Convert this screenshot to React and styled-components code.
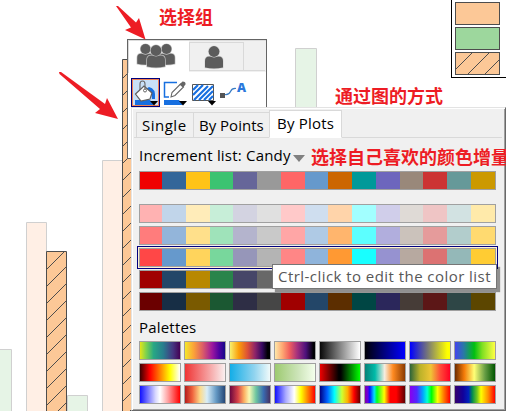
import React from "react";
import styled, { createGlobalStyle } from "styled-components";

const Global = createGlobalStyle`
  * { box-sizing: border-box; }
  body { margin: 0; background: #fff; overflow: hidden; }
`;

const Stage = styled.main`
  position: relative;
  width: 506px;
  height: 411px;
  overflow: hidden;
  background: #fff;
  font-family: "Open Sans", "Noto Sans", sans-serif;
`;

const Plot = styled.svg`
  display: block;
`;

const Legend = styled.div`
  position: absolute;
  left: 451px;
  top: -10px;
  width: 70px;
  height: 88px;
  padding: 11px 0 0 3px;
  border: 1px solid #000;
  display: flex;
  flex-direction: column;
  gap: 2px;
  background: #fff;
`;

const LegendSwatch = styled.svg`
  width: 45px;
  height: 23px;
  flex: none;
  display: block;
  background: ${(p) => p.$fill};
  border: 1px solid #4d4d4d;
`;

const MiniToolbar = styled.section`
  position: absolute;
  left: 127px;
  top: 39px;
  width: 140px;
  height: 120px;
  border: 1px solid #646464;
  background: #fff;
`;

const ScopeTabs = styled.div`
  display: flex;
  height: 32px;
  background: #f0f0f0;
  border-top: 1px solid #dcdcdc;
`;

const ScopeTab = styled.div`
  width: ${(p) => p.$width}px;
  height: ${(p) => (p.$active ? 32 : 29)}px;
  margin-top: ${(p) => (p.$active ? 0 : 1)}px;
  background: ${(p) => (p.$active ? "#fff" : "#f0f0f0")};
  border: solid #d9d9d9;
  border-width: ${(p) => (p.$active ? "0 0 0 1px" : "1px 1px 1px 1px")};
  display: flex;
  justify-content: center;
`;

const TabRule = styled.div`
  flex: 1;
  height: 30px;
  margin-right: 1px;
  border-bottom: 1px solid #d9d9d9;
`;

const ToolRow = styled.div`
  display: flex;
  align-items: flex-start;
  padding: 6px 0 0 3px;
`;

const ToolButton = styled.button`
  display: block;
  width: 29px;
  height: 29px;
  padding: 0;
  border: 1px solid ${(p) => (p.$active ? "#00007b" : "transparent")};
  background: ${(p) => (p.$active ? "#c9e0f7" : "transparent")};
  box-shadow: ${(p) => (p.$active ? "inset 0 0 0 1px #f08050" : "none")};
`;

const Glyph = styled.svg`
  display: block;
  overflow: visible;
`;

const Panel = styled.section`
  position: absolute;
  left: 131px;
  top: 107px;
  width: 375px;
  height: 304px;
  border: 1px solid;
  border-color: #e3e3e3 #696969 #696969 #e3e3e3;
  background: #f0f0f0;
  box-shadow: inset 1px 1px #fff, inset -1px -1px #a0a0a0;
  padding: 2px 3px 0 2px;
`;

const TabBar = styled.div`
  display: flex;
  align-items: flex-end;
  height: 28px;
  padding-left: 2px;
  box-shadow: inset 0 -1px #d9d9d9;
`;

const Tab = styled.div`
  width: ${(p) => p.$width}px;
  height: ${(p) => (p.$active ? 28 : 26)}px;
  border: 1px solid #d9d9d9;
  border-right-width: ${(p) => (p.$active ? 1 : 0)}px;
  border-bottom-color: ${(p) => (p.$active ? "#fff" : "#d9d9d9")};
  background: ${(p) => (p.$active ? "#fff" : "#f0f0f0")};
  padding-left: ${(p) => p.$inset}px;
  font-size: 15px;
  letter-spacing: ${(p) => p.$track || 0}px;
  line-height: ${(p) => (p.$active ? 25 : 24)}px;
  white-space: nowrap;
  color: #000;
`;

const PanelBody = styled.div`
  display: flex;
  flex-direction: column;
  padding: 6px 0 0 5px;
`;

const Heading = styled.div`
  display: flex;
  align-items: center;
  height: 22px;
  margin-bottom: 5px;
  font-size: 15px;
  letter-spacing: 0.2px;
  white-space: nowrap;
  color: #000;
`;

const DropArrow = styled.i`
  margin: 6px 0 0 2px;
  border: solid transparent;
  border-width: 7px 6.5px 0;
  border-top-color: #808080;
`;

const Strip = styled.div`
  display: grid;
  grid-template-columns: 22px 24px 24px 23px 24px 24px 24px 23px 24px 24px 24px 23px 24px 24px 24px;
  width: 357px;
  height: 19px;
  border: 1px solid #a0a0a0;
  outline: ${(p) => (p.$selected ? "1px solid #000080" : "none")};
  outline-offset: 1px;
  box-shadow: ${(p) => (p.$selected ? "0 0 0 1px #fff0d0" : "none")};
`;

const Cell = styled.span`
  background: ${(p) => p.$color};
`;

const Shades = styled.div`
  display: flex;
  flex-direction: column;
  gap: 3px;
  margin: 14px 0 5px;
`;

const PaletteGrid = styled.div`
  display: grid;
  grid-template-columns: repeat(8, 42px);
  grid-auto-rows: 19px;
  gap: 3px;
  margin-top: -2px;
`;

const Palette = styled.div`
  border: 1px solid #a0a0a0;
  background: linear-gradient(to right, ${(p) => p.$stops});
`;

const Tooltip = styled.div`
  position: absolute;
  left: 272px;
  top: 264px;
  width: 225px;
  height: 25px;
  padding-left: 5px;
  border: 1px solid #767676;
  background: #fff;
  box-shadow: 3px 3px 1px rgba(0, 0, 0, 0.4);
  font-size: 15px;
  letter-spacing: 0.45px;
  line-height: 23px;
  white-space: nowrap;
  color: #575757;
`;

const Note = styled.div`
  position: absolute;
  left: ${(p) => p.$x}px;
  top: ${(p) => p.$y}px;
  font: bold 18px/24px "Noto Sans CJK SC", sans-serif;
  white-space: nowrap;
  color: #ed1c24;
`;

const Arrows = styled.svg`
  position: absolute;
  left: 0;
  top: 0;
  pointer-events: none;
`;

const base = ["#f00000", "#336699", "#ffc317", "#3cc371", "#666699", "#999999", "#ff6666", "#6699cc", "#cc6600", "#009999", "#6d66bd", "#99887a", "#cc3333", "#669999", "#cc9900"];

const shades = [
  ["#ffb2b2", "#c1d5ea", "#ffecb9", "#c7eed8", "#d3d3e1", "#e0e0e0", "#ffc9c9", "#cfdeef", "#ffd4aa", "#a2ffff", "#d0ceea", "#dfdad6", "#efc5c5", "#d2e2e2", "#ffeaaa"],
  ["#ff7c7c", "#93b5da", "#ffe08b", "#9fe3ba", "#b4b4cd", "#c9c9c9", "#ffa6a6", "#afcae5", "#ffb56d", "#5cffff", "#b1aedd", "#cbc2bb", "#e59b9b", "#b2cdcc", "#ffda70"],
  ["#ff4747", "#6699cc", "#ffd45c", "#78d79c", "#9696b9", "#b4b4b4", "#ff8686", "#8fb4db", "#ff9933", "#18ffff", "#9692d0", "#b7a9a0", "#dc7272", "#94b8b8", "#ffcc33"],
  ["#a00000", "#234668", "#b88800", "#29844b", "#464668", "#686868", "#ee0000", "#346698", "#884400", "#006666", "#433c90", "#675a50", "#882222", "#446666", "#886600"],
  ["#6b0000", "#172e45", "#7a5a00", "#1b5832", "#2e2e45", "#464646", "#a00000", "#234668", "#5c2e00", "#004644", "#2b275b", "#463c37", "#5c1717", "#2e4646", "#5c4600"],
];

const palettes = [
  "#e4e419, #80d34d 15%, #27a784 34%, #287d8e 58%, #453681 82%, #440154",
  "#f4e72a, #fba238 22%, #dc5e66 44%, #9c179e 68%, #5002a2 85%, #160788",
  "#f7f06f, #fb9d08 22%, #dc5038 44%, #8c2369 63%, #360961 80%, #000004 94%",
  "#fde7a9, #fea973 18%, #f1605d 36%, #a3307e 56%, #4c117b 77%, #000004 96%",
  "#080808, #fff",
  "#000005, #00007c 47%, #0000ff",
  "#0000ff, #777777 44%, #ffff00 93%",
  "#4444ed, #2979a5 22%, #00bf12 48%, #7fdf22 68%, #ffff44",
  "#3b0000, #ff0000 25%, #ff8000 50%, #ffff00 75%, #fff",
  "#ef3434, #f6a6a6 62%, #faf0f0",
  "#13ade7, #91d4ef 61%, #f0fafa",
  "#9dca70, #cce4b8 57%, #f4ffec",
  "#ed0000, #000 47%, #000 52%, #00ff00",
  "#088078, #00bba9 25%, #f6ede0 49%, #ff8a20 70%, #8b3a00",
  "#2e6439, #bcb229 25%, #efc536 52%, #ff4937 76%, #ff0024",
  "#6c2c00, #f47a08 23%, #ffff77 48%, #669d44 75%, #005500",
  "#1111ff, #d8d8ff 39%, #fff 50%, #ffa0a0 70%, #ff0000",
  "#b51c1c, #ef603c 18%, #fddc8c 38%, #d8edf8 55%, #6499c4 78%, #254777",
  "#6b063f, #d74248 20%, #fcae61 35%, #fafab5 48%, #6ec6a0 65%, #396ab0 84%, #463262",
  "#1111ff, #aaaaff 27%, #fff 48%, #ffff00 65%, #ff9000 80%, #ff0000",
  "#000083, #0060ff 18%, #00ffff 36%, #d0ff30 55%, #ffb000 69%, #ff0000 85%, #650000",
  "#8200a5, #6700e1 7%, #0018ff 12%, #00ddff 23%, #00ff22 30%, #ffff00 48%, #ff0000 63%, #ff0000 78%, #5e0000",
  "#8800ee, #5128ff 17%, #00a5ff 32%, #00ffd5 43%, #00ff00 54%, #ffff00 69%, #ff7500 85%, #ff0000",
  "#36006c, #12009a 20%, #0022bb 34%, #008a50 43%, #6ec520 55%, #ffff00 65%, #ff8c00 83%, #ff0000",
];

const hatchLines = (x0, x1, y0, y1, phase) => {
  const out = [];
  for (let s = phase; s - x0 < y1 + (x1 - x0); s += 17) {
    const xe = Math.min(x1, s - y0);
    if (xe > x0) out.push(`M${x0} ${s - x0}L${xe} ${s - xe}`);
  }
  return out.join("");
};

function Chart() {
  return (
    <Plot width="506" height="411">
      <g fill="#e6f4e6" stroke="#d0d0d0">
        <path d="M-2 349.5H11.5V420H-2zM67.5 395.5H87.5V420H67.5zM295.5 48.5H316.5V420H295.5z" />
        <path fill="#ffefe5" d="M26.5 222.5H46.5V420H26.5zM102.5 160.5H122.5V420H102.5z" />
      </g>
      <g fill="#fcc897" stroke="#4d4d4d">
        <path d="M46.5 251.5H66.5V420H46.5zM122.5 59.5H142.5V420H122.5z" />
        <path fill="none" d={hatchLines(47, 66, 252, 411, 316)} />
        <path fill="none" d={hatchLines(123, 142, 60, 411, 201)} />
      </g>
    </Plot>
  );
}

const Person = ({ x, y, s = 1, halo }) => (
  <g transform={`translate(${x} ${y}) scale(${s})`} stroke={halo} strokeWidth="1.4" paintOrder="stroke">
    <path d="M-9 21.5V15Q-9 10.5 -5 10.5H5Q9 10.5 9 15V21.5Q0 23.5 -9 21.5Z" />
    <circle cx="0" cy="5.5" r="5.4" />
  </g>
);

const GroupIcon = () => (
  <Glyph width="42" height="28" fill="#5c5c5c">
    <Person x={7.5} y={3} s={0.92} halo="#c4c4c4" />
    <Person x={28.5} y={3} s={0.92} halo="#c4c4c4" />
    <Person x={18} y={4} halo="#c4c4c4" />
  </Glyph>
);

const SingleIcon = () => (
  <Glyph width="20" height="26" fill="#5c5c5c">
    <Person x={7} y={3} halo="#dcdcdc" />
  </Glyph>
);

const Caret = () => <path d="M18 22H26L22 26.5Z" fill="#000" />;

const FillIcon = () => (
  <Glyph width="27" height="27">
    <path d="M3 21H18L22 26H3Z" fill="#176fe0" />
    <path d="M17 8Q24 9 23 20H20Q20 12 14 10Z" fill="#176fe0" />
    <path d="M3.5 15L12 7L20 14L18 20L9 22Z" fill="#fff" stroke="#606060" strokeWidth="1.2" />
    <path d="M8 11V5Q8 2 10.5 2T13 5V11" fill="none" stroke="#666" strokeWidth="1.1" />
    <circle cx="13" cy="11.5" r="1.5" fill="#fff" stroke="#666" />
    <Caret />
  </Glyph>
);

const LineIcon = () => (
  <Glyph width="27" height="27">
    <path d="M3 21H18L22 26H3Z" fill="#176fe0" />
    <path d="M16 3.5H3.5V18H8" fill="none" stroke="#176fe0" strokeWidth="1.5" />
    <path d="M10 18L11 13.5L19.5 5L22.5 8L14 16.5Z" fill="#fff" stroke="#666" strokeWidth="1.1" />
    <path d="M18.5 5.5L21.5 2.5Q25 2.5 24.5 5.5L22 8.5Z" fill="#666" />
    <Caret />
  </Glyph>
);

const PatternIcon = () => (
  <Glyph width="27" height="27">
    <path d="M2.5 5.5H23.5V21.5H2.5Z" fill="#fff" stroke="#555" />
    <path d="M3 11L8 6M3 16L13 6M4 21L18 7M9 21L23 7M14 21L23 12M19 21L23 17" stroke="#176fe0" strokeWidth="2.2" />
    <Caret />
  </Glyph>
);

const LabelIcon = () => (
  <Glyph width="27" height="27">
    <path d="M1 14H6V19H1Z" fill="#555" />
    <path d="M6 15.5Q10 16 11.500 12.500T17 9.500" fill="none" stroke="#397cc4" strokeWidth="1.2" />
    <text x="18" y="13" fontFamily="Open Sans" fontWeight="800" fontSize="12.500" fill="#2b78dc">A</text>
  </Glyph>
);

export default function App() {
  return (
    <Stage>
      <Global />
      <Chart />
      <Legend>
        <LegendSwatch $fill="#fcc897" />
        <LegendSwatch $fill="#9dd79d" />
        <LegendSwatch $fill="#fcc897">
          <path d="M0 16L16 0M12 21L33 0M29 21L43 7" stroke="#4d4d4d" />
        </LegendSwatch>
      </Legend>

      <MiniToolbar>
        <ScopeTabs>
          <ScopeTab $active $width={61}><GroupIcon /></ScopeTab>
          <ScopeTab $width={55}><SingleIcon /></ScopeTab>
          <TabRule />
        </ScopeTabs>
        <ToolRow>
          <ToolButton $active><FillIcon /></ToolButton>
          <ToolButton><LineIcon /></ToolButton>
          <ToolButton><PatternIcon /></ToolButton>
          <ToolButton><LabelIcon /></ToolButton>
        </ToolRow>
      </MiniToolbar>

      <Panel>
        <TabBar>
          <Tab $width={57} $inset={5} $track={0.5}>Single</Tab>
          <Tab $width={76} $inset={5}>By Points</Tab>
          <Tab $active $width={73} $inset={7} $track={0.2}>By Plots</Tab>
        </TabBar>
        <PanelBody>
          <Heading>Increment list: Candy<DropArrow /></Heading>
          <Strip>{base.map((c) => <Cell key={c} $color={c} />)}</Strip>
          <Shades>
            {shades.map((row, i) => (
              <Strip key={i} $selected={i === 2}>
                {row.map((c, j) => <Cell key={j} $color={c} />)}
              </Strip>
            ))}
          </Shades>
          <Heading>Palettes</Heading>
          <PaletteGrid>
            {palettes.map((stops, i) => <Palette key={i} $stops={stops} />)}
          </PaletteGrid>
        </PanelBody>
      </Panel>

      <Tooltip>Ctrl-click to edit the color list</Tooltip>
      <Note $x={159} $y={4}>选择组</Note>
      <Note $x={335} $y={83}>通过图的方式</Note>
      <Note $x={311} $y={144}>选择自己喜欢的颜色增量</Note>
      <Arrows width="506" height="411" fill="#ed1c24">
        <path d="M116 6L118 6L136 22.5L139 18L145.5 39.5L125 30L131 27.5Z" />
        <path d="M59 72L61 72L105 104L107 98L118 119L95 113L100 109L59.5 74Z" />
      </Arrows>
    </Stage>
  );
}
